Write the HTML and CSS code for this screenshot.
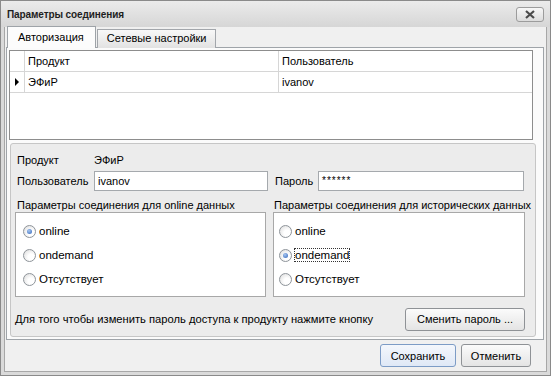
FILE: index.html
```html
<!DOCTYPE html>
<html lang="ru">
<head>
  <meta charset="UTF-8">
  <title>Параметры соединения</title>
  <link rel="stylesheet" href="styles.css">
</head>
<body>
  <div class="window">
    <div class="titlebar">
      <span class="title">Параметры соединения</span>
      <button class="close-btn">
        <svg width="12" height="9" viewBox="0 0 12 9">
          <path d="M2 1 L10 8 M10 1 L2 8" stroke="#4b4b4b" stroke-width="2.2" fill="none"/>
        </svg>
      </button>
    </div>

    <div class="frame">
      <div class="client">
        <div class="tabs">
          <div class="tab active">Авторизация</div>
          <div class="tab">Сетевые настройки</div>
        </div>

        <div class="tab-page">
          <div class="grid">
            <div class="grid-row header">
              <div class="cell indicator"></div>
              <div class="cell col-product">Продукт</div>
              <div class="cell col-user">Пользователь</div>
            </div>
            <div class="grid-row">
              <div class="cell indicator"><span class="arrow"></span></div>
              <div class="cell col-product">ЭФиР</div>
              <div class="cell col-user">ivanov</div>
            </div>
          </div>

          <div class="panel">
            <div class="row product-row">
              <span class="label label-wide">Продукт</span>
              <span class="value">ЭФиР</span>
            </div>
            <div class="row">
              <span class="label label-wide">Пользователь</span>
              <div class="input input-user">ivanov</div>
              <span class="label label-pass">Пароль</span>
              <div class="input input-pass">******</div>
            </div>
            <div class="row groups">
              <div class="group group-left">
                <div class="group-title">Параметры соединения для online данных</div>
                <div class="group-box">
                  <div class="radio-row"><span class="radio checked"></span>online</div>
                  <div class="radio-row"><span class="radio"></span>ondemand</div>
                  <div class="radio-row"><span class="radio"></span>Отсутствует</div>
                </div>
              </div>
              <div class="group group-right">
                <div class="group-title">Параметры соединения для исторических данных</div>
                <div class="group-box">
                  <div class="radio-row"><span class="radio"></span>online</div>
                  <div class="radio-row"><span class="radio checked"></span><span class="focus">ondemand</span></div>
                  <div class="radio-row"><span class="radio"></span>Отсутствует</div>
                </div>
              </div>
            </div>
            <div class="row hint-row">
              <span class="hint">Для того чтобы изменить пароль доступа к продукту нажмите кнопку</span>
              <button class="btn btn-change">Сменить пароль ...</button>
            </div>
          </div>
        </div>

        <div class="bottom-bar">
          <button class="btn btn-save">Сохранить</button>
          <button class="btn btn-cancel">Отменить</button>
        </div>
      </div>
    </div>
  </div>
</body>
</html>
```

FILE: styles.css
```css
* {
  box-sizing: border-box;
}
body {
  margin: 0;
  font-family: "Liberation Sans", Arial, sans-serif;
  font-size: 11px;
  color: #000;
  background: #ffffff;
}
.window {
  width: 551px;
  height: 376px;
  border: 1px solid #8a8a8a;
  display: flex;
  flex-direction: column;
  background: #dadada;
}
.titlebar {
  height: 26px;
  display: flex;
  align-items: center;
  justify-content: space-between;
  padding: 0 6px 0 6px;
  background: linear-gradient(#ebebeb, #d6d6d6);
}
.title {
  font-weight: bold;
  font-size: 10px;
  letter-spacing: -0.1px;
  color: #1e1e1e;
  margin-top: 1px;
}
.close-btn {
  width: 28px;
  height: 15px;
  padding: 0;
  border: 1px solid #9c9c9c;
  border-radius: 3px;
  background: linear-gradient(#f7f7f7, #dcdcdc);
  display: flex;
  align-items: center;
  justify-content: center;
  margin-top: 1px;
}

/* рамка вокруг клиентской области */
.frame {
  flex: 1;
  display: flex;
  padding: 0 3px 3px 3px;
}
.client {
  flex: 1;
  display: flex;
  flex-direction: column;
  background: #f0f0f0;
  border: 1px solid #a7a7a7;
  border-top: none;
}

.tabs {
  height: 21px;
  display: flex;
  align-items: flex-end;
  padding-left: 2px;
  position: relative;
  z-index: 1;
  margin-bottom: -1px;
}
.tab {
  height: 19px;
  padding: 0 8px 0 9px;
  line-height: 17px;
  border: 1px solid #a2a6ab;
  border-bottom: none;
  background: linear-gradient(#f8f8f8, #e2e2e2);
  white-space: nowrap;
}
.tab.active {
  height: 22px;
  padding: 0 11px 0 10px;
  line-height: 20px;
  background: #fcfcfc;
  border-color: #9ea3a8;
}
.tab + .tab {
  margin-left: 1px;
}

.tab-page {
  margin: 0 2px 0 1px;
  border: 1px solid #9fa4a9;
  background: #fbfbfb;
  padding: 2px 0 2px 2px;
}

.grid {
  width: 524px;
  height: 90px;
  border: 1px solid #8d8d8d;
  background: #fff;
}
.grid-row {
  display: flex;
  height: 21px;
  border-bottom: 1px solid #d6d6d6;
}
.cell {
  line-height: 20px;
  padding-left: 3px;
  white-space: nowrap;
}
.indicator {
  width: 15px;
  padding: 0;
  border-right: 1px solid #d6d6d6;
  display: flex;
  align-items: center;
  justify-content: center;
}
.arrow {
  width: 0;
  height: 0;
  border-top: 4px solid transparent;
  border-bottom: 4px solid transparent;
  border-left: 4px solid #000;
}
.col-product {
  width: 254px;
  border-right: 1px solid #d6d6d6;
}
.col-user {
  flex: 1;
}

.panel {
  width: 526px;
  height: 194px;
  margin: 3px 0 0 1px;
  border: 1px solid #c6c6c6;
  border-radius: 3px;
  background: #ececec;
  padding: 6px 10px 0 4px;
}
.row {
  display: flex;
  align-items: center;
}
.product-row {
  height: 20px;
  margin-bottom: 1px;
}
.label {
  padding-left: 2px;
  white-space: nowrap;
}
.label-wide {
  width: 79px;
}
.label-pass {
  width: 45px;
  margin-left: 5px;
}
.input {
  height: 20px;
  border: 1px solid #a5a9ad;
  background: #fff;
  padding-left: 3px;
  line-height: 18px;
}
.input-user {
  width: 174px;
}
.input-pass {
  width: 206px;
  font-size: 10px;
  letter-spacing: 1px;
}

.groups {
  margin-top: 8px;
  align-items: flex-start;
  gap: 6px;
}
.group-title {
  height: 13px;
  line-height: 13px;
  padding-left: 2px;
  white-space: nowrap;
}
.group-left {
  width: 254px;
}
.group-right {
  width: 252px;
  margin-left: 1px;
}
.group-right .group-title {
  padding-left: 1px;
}
.group-box {
  height: 85px;
  border: 1px solid #a8a8a8;
  background: #fff;
  padding: 6px 0 0 7px;
}
.group-right .group-box {
  padding-left: 5px;
}
.radio-row {
  height: 24px;
  display: flex;
  align-items: center;
  font-size: 11.5px;
}
.radio {
  width: 13px;
  height: 13px;
  border-radius: 50%;
  border: 1px solid #8e949a;
  background: radial-gradient(circle at 65% 65%, #ffffff 30%, #d9d9d9 100%);
  margin-right: 3px;
  position: relative;
}
.radio.checked::after {
  content: "";
  position: absolute;
  left: 3px;
  top: 3px;
  width: 5px;
  height: 5px;
  border-radius: 50%;
  background: radial-gradient(circle at 40% 35%, #a9c8f2, #2f63b8);
}
.focus {
  outline: 1px dotted #333;
  outline-offset: 0;
}

.hint-row {
  margin-top: 10px;
  height: 24px;
  justify-content: space-between;
}
.hint {
  font-size: 11.2px;
  white-space: nowrap;
}

.btn {
  font-family: inherit;
  font-size: 11px;
  color: #000;
  height: 23px;
  padding: 0;
  border: 1px solid #8f9296;
  border-radius: 3px;
  background: linear-gradient(#fbfbfb, #e4e4e4);
}
.btn-change {
  width: 120px;
}

.bottom-bar {
  flex: 1;
  display: flex;
  justify-content: flex-end;
  align-items: flex-start;
  padding: 4px 15px 0 0;
  gap: 5px;
}
.btn-save {
  width: 76px;
  border-color: #7d9cc6;
  background: linear-gradient(#f4f7fc, #dfe8f6);
}
.btn-cancel {
  width: 70px;
}
```
